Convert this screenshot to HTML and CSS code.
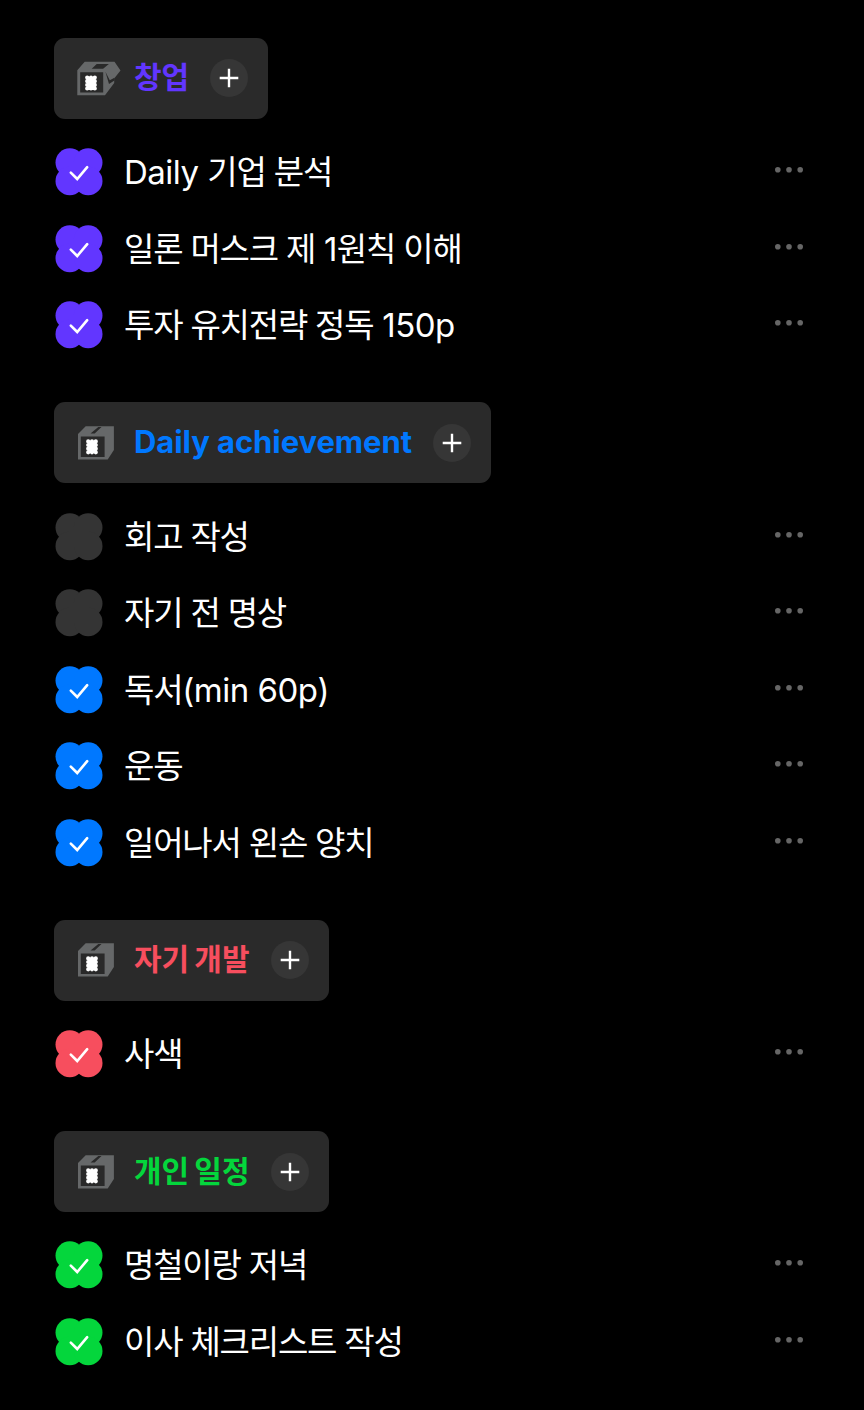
FILE: index.html
```html
<!DOCTYPE html>
<html lang="ko">
<head>
    <meta charset="UTF-8">
    <meta name="viewport" content="width=device-width, initial-scale=1.0">
    <title>Todo</title>
    <link rel="stylesheet" href="styles.css">
</head>
<body>

    <!-- Shared icons -->
    <svg class="icons" width="0" height="0">
        <symbol id="box-open" viewBox="0 0 44 36">
            <path class="box" d="M0.3 10.2 7.7 1.8H37.5l6 8.6-6.3 8V23L28 35.2H0.3z"/>
            <path class="hole" d="M3.2 12.2h23v20.2h-23zM14.7 8.8l5-4.8h12.2l-5.8 4.8zM28.4 11.8l4.4 8.4 4.6-2.4v2.6l-5.4 3.6z"/>
            <path class="stamp" d="M10.2 17.6h0M14 17.6h0M17.8 17.6h0M10.2 21.2h0M17.8 21.2h0M10.2 24.9h0M17.8 24.9h0M10.2 28.5h0M14 28.5h0M17.8 28.5h0"/>
            <path class="stamp-fill" d="M9.6 17h8.8v12H9.6z"/>
        </symbol>
        <symbol id="box" viewBox="0 0 44 36">
            <path class="box" d="M1 9 8.7 1.3H36.9V25l-6.2 9.5H1z"/>
            <path class="hole" d="M3.8 11.6h23.8v20.4h-23.8zM13.5 8.4 21.3 2h3.2l-6.8 6.4z"/>
            <path class="stamp" d="M11.2 16.4h0M15 16.4h0M18.8 16.4h0M11.2 20h0M18.8 20h0M11.2 23.7h0M18.8 23.7h0M11.2 27.3h0M15 27.3h0M18.8 27.3h0"/>
            <path class="stamp-fill" d="M10.6 15.8h8.8v12h-8.8z"/>
        </symbol>
        <symbol id="plus" viewBox="0 0 38 38">
            <path d="M19 9.7v18.6M9.7 19h18.6"/>
        </symbol>
        <symbol id="clover" viewBox="0 0 48 48">
            <circle cx="14.8" cy="14.6" r="14.3"/>
            <circle cx="33.2" cy="14.6" r="14.3"/>
            <circle cx="14.8" cy="33" r="14.3"/>
            <circle cx="33.2" cy="33" r="14.3"/>
            <path d="M14 14h20v20H14z"/>
        </symbol>
        <symbol id="check" viewBox="0 0 48 48">
            <path d="M15.8 24.6l6.4 6.4L32.2 19.2"/>
        </symbol>
        <symbol id="dots" viewBox="0 0 30 8">
            <circle cx="3.8" cy="3.7" r="2.8"/>
            <circle cx="15" cy="3.7" r="2.8"/>
            <circle cx="26.2" cy="3.7" r="2.8"/>
        </symbol>
    </svg>

    <main class="todo">
        <section class="group purple">
            <button class="category">
                <svg class="category-icon"><use href="#box-open"/></svg>
                <span class="category-name">창업</span>
                <svg class="add"><use href="#plus"/></svg>
            </button>
            <ul class="list">
                <li class="item done">
                    <svg class="mark"><use href="#clover"/><use class="tick" href="#check"/></svg>
                    <span class="text"><span class="latin">Daily </span>기업 분석</span>
                    <svg class="more"><use href="#dots"/></svg>
                </li>
                <li class="item done">
                    <svg class="mark"><use href="#clover"/><use class="tick" href="#check"/></svg>
                    <span class="text">일론 머스크 제<span class="latin"> 1</span>원칙 이해</span>
                    <svg class="more"><use href="#dots"/></svg>
                </li>
                <li class="item done">
                    <svg class="mark"><use href="#clover"/><use class="tick" href="#check"/></svg>
                    <span class="text">투자 유치전략 정독<span class="latin"> 150p</span></span>
                    <svg class="more"><use href="#dots"/></svg>
                </li>
            </ul>
        </section>

        <section class="group blue">
            <button class="category">
                <svg class="category-icon"><use href="#box"/></svg>
                <span class="category-name">Daily achievement</span>
                <svg class="add"><use href="#plus"/></svg>
            </button>
            <ul class="list">
                <li class="item">
                    <svg class="mark"><use href="#clover"/></svg>
                    <span class="text">회고 작성</span>
                    <svg class="more"><use href="#dots"/></svg>
                </li>
                <li class="item">
                    <svg class="mark"><use href="#clover"/></svg>
                    <span class="text">자기 전 명상</span>
                    <svg class="more"><use href="#dots"/></svg>
                </li>
                <li class="item done">
                    <svg class="mark"><use href="#clover"/><use class="tick" href="#check"/></svg>
                    <span class="text">독서<span class="latin">(min 60p)</span></span>
                    <svg class="more"><use href="#dots"/></svg>
                </li>
                <li class="item done">
                    <svg class="mark"><use href="#clover"/><use class="tick" href="#check"/></svg>
                    <span class="text">운동</span>
                    <svg class="more"><use href="#dots"/></svg>
                </li>
                <li class="item done">
                    <svg class="mark"><use href="#clover"/><use class="tick" href="#check"/></svg>
                    <span class="text">일어나서 왼손 양치</span>
                    <svg class="more"><use href="#dots"/></svg>
                </li>
            </ul>
        </section>

        <section class="group red">
            <button class="category">
                <svg class="category-icon"><use href="#box"/></svg>
                <span class="category-name">자기 개발</span>
                <svg class="add"><use href="#plus"/></svg>
            </button>
            <ul class="list">
                <li class="item done">
                    <svg class="mark"><use href="#clover"/><use class="tick" href="#check"/></svg>
                    <span class="text">사색</span>
                    <svg class="more"><use href="#dots"/></svg>
                </li>
            </ul>
        </section>

        <section class="group green">
            <button class="category">
                <svg class="category-icon"><use href="#box"/></svg>
                <span class="category-name">개인 일정</span>
                <svg class="add"><use href="#plus"/></svg>
            </button>
            <ul class="list">
                <li class="item done">
                    <svg class="mark"><use href="#clover"/><use class="tick" href="#check"/></svg>
                    <span class="text">명철이랑 저녁</span>
                    <svg class="more"><use href="#dots"/></svg>
                </li>
                <li class="item done">
                    <svg class="mark"><use href="#clover"/><use class="tick" href="#check"/></svg>
                    <span class="text">이사 체크리스트 작성</span>
                    <svg class="more"><use href="#dots"/></svg>
                </li>
            </ul>
        </section>
    </main>

</body>
</html>
```
FILE: styles.css
```css
* {
    box-sizing: border-box;
}

body {
    margin: 0;
    background: #000;
    color: #fff;
    font-family: Inter, "Noto Sans CJK KR", sans-serif;
}

.icons {
    display: block;
}

.todo {
    height: 1410px;
    padding: 37.9px 60px 0 54px;
    overflow: hidden;
}

/* Category colors */
.purple {
    --color: #6236ff;
}

.blue {
    --color: #0078ff;
}

.red {
    --color: #f74e5e;
}

.green {
    --color: #04d63c;
}

.group {
    margin-bottom: 38.6px;
}

/* Category button */
.category {
    display: flex;
    align-items: center;
    height: 81px;
    padding: 0 20px 0 23px;
    border: none;
    border-radius: 11px;
    background: #2a2a2a;
    font-family: inherit;
    cursor: pointer;
}

.category-icon {
    width: 44px;
    height: 36px;
    margin-right: 13px;
}

.category-name {
    height: 40px;
    margin-right: 21px;
    color: var(--color);
    font-size: 31px;
    font-weight: 700;
    line-height: 38px;
    letter-spacing: -0.08px;
    white-space: nowrap;
}

.purple .category-name,
.red .category-name,
.green .category-name {
    font-size: 30px;
    letter-spacing: 0;
    word-spacing: -2px;
}

.box {
    fill: #666869;
}

.hole {
    fill: #292929;
}

.stamp {
    fill: none;
    stroke: #fff;
    stroke-width: 4.2;
    stroke-linecap: round;
}

.stamp-fill {
    fill: #fff;
}

.add {
    width: 38px;
    height: 38px;
    border-radius: 50%;
    background: #363636;
    stroke: #fff;
    stroke-width: 2.4;
}

.category-icon {
    stroke: none;
}

/* Todo items */
.list {
    margin: 0;
    padding: 15px 0 0;
    list-style: none;
}

.item {
    display: flex;
    align-items: center;
    height: 76.6px;
}

.mark {
    width: 48px;
    height: 48px;
    margin: 0 21px 0 1px;
    fill: #343434;
}

.done .mark {
    fill: var(--color);
}

.tick {
    fill: none;
    stroke: #fff;
    stroke-width: 2.6;
    stroke-linecap: round;
}

.text {
    flex: 1;
    font-size: 33px;
    line-height: 48px;
    letter-spacing: -1.2px;
    white-space: nowrap;
}

.latin {
    letter-spacing: -0.5px;
}

.more {
    width: 30px;
    height: 8px;
    margin-bottom: 4px;
    fill: #666;
}
```
